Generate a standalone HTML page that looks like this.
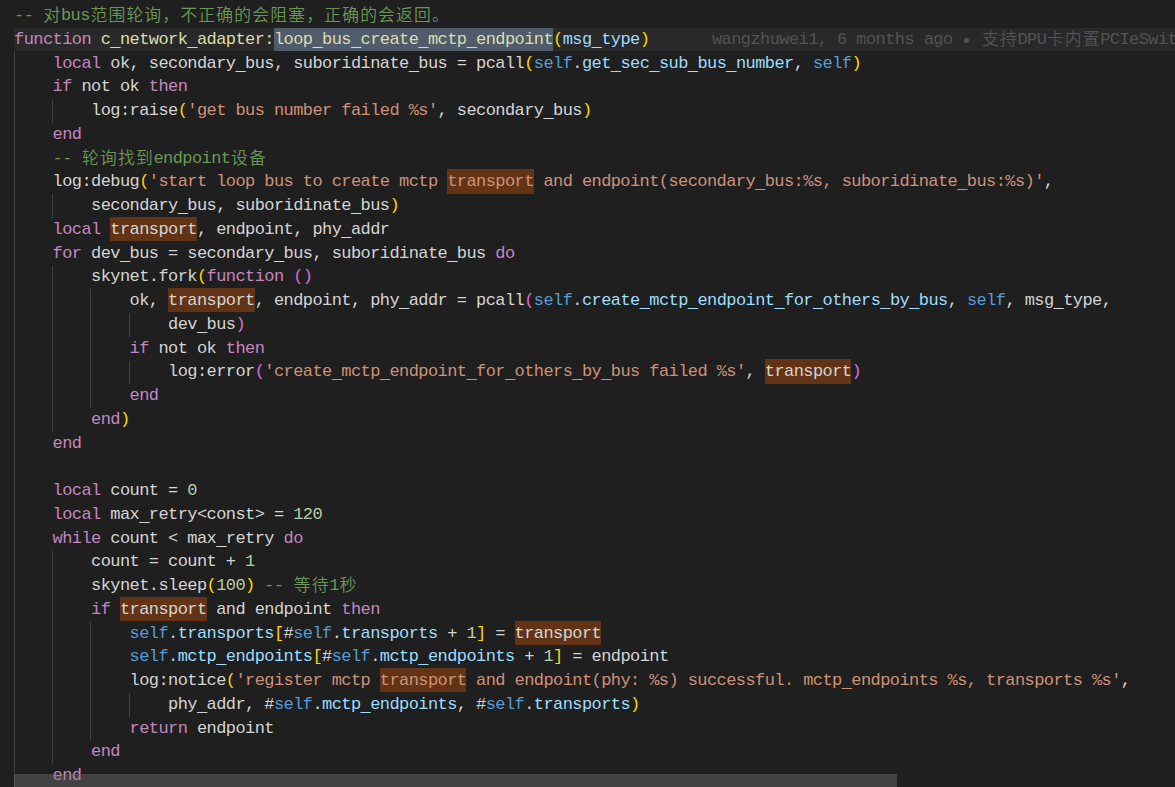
<!DOCTYPE html>
<html lang="zh"><head><meta charset="utf-8"><title>network_adapter.lua</title>
<style>
html,body{margin:0;padding:0;background:#1f1f1f;}
body{width:1175px;height:787px;overflow:hidden;position:relative;}
#gut{position:absolute;left:0;top:0;width:14px;height:787px;background:#1f1f1f;}
#ed{position:absolute;left:0;top:0;width:1175px;height:787px;overflow:hidden;
 font-family:"Liberation Mono","Noto Sans CJK SC",monospace;font-size:17.0px;color:#d4d4d4;
 font-variant-ligatures:none;letter-spacing:-0.5784px;}
.ln{position:absolute;left:14.1px;width:1160.9px;height:23.75px;line-height:23.75px;white-space:pre;overflow:visible;}
.ln.cur::before{content:"";position:absolute;left:-0.6px;right:0;top:0;height:23.0px;background:#292929;}
.tx{position:relative;top:-0.15px;display:inline-block;height:23.75px;line-height:23.75px;vertical-align:top;}
.g{position:absolute;top:0;width:1px;height:23.75px;background:#404040;margin-left:-0.6px;}
.z{letter-spacing:1.200px;font-size:16.8px;line-height:1px;font-family:"Noto Sans CJK SC",sans-serif;font-weight:350;position:relative;top:1.2px;left:0.600px;}
.k{color:#c586c0} .f{color:#dcdcaa} .p{color:#9cdcfe} .s{color:#569cd6} .t{color:#ce9178}
.n{color:#b5cea8} .c{color:#6a9955} .d{color:#d4d4d4}
.b1{color:#ffd700} .b2{color:#da70d6} .b3{color:#179fff}
.h{background:#623315;}
.sel{background:#505c6c;}
.h,.sel{display:inline-block;height:23.25px;line-height:23.75px;vertical-align:top;}
.h{margin-top:-1px;padding-top:1px;}
.blame{position:absolute;left:697.9px;top:-0.15px;color:#535353;height:23.75px;line-height:23.75px;}
.bu{display:inline-block;width:9.6216px;letter-spacing:0;text-align:center;font-size:19px;line-height:1px;vertical-align:-3.2px;text-indent:-1.5px;}
u{text-decoration:none;position:relative;top:2px;}
#sb{position:absolute;left:14px;top:774px;width:883px;height:13px;background:rgba(121,121,121,0.4);}
</style></head>
<body>
<div id="gut"></div>
<div id="ed">
<div class="ln" style="top:4.25px"><span class="tx"><span class="c">-- <span class="z">对</span>bus<span class="z">范围轮询，不正确的会阻塞，正确的会返回。</span></span></span></div>
<div class="ln cur" style="top:28.00px"><span class="tx"><span class="k">function</span><span class="d"> </span><span class="f">c<u>_</u>network<u>_</u>adapter:</span><span class="sel f">loop<u>_</u>bus<u>_</u>create<u>_</u>mctp<u>_</u>endpoint</span><span class="b1">(</span><span class="p">msg<u>_</u>type</span><span class="b1">)</span></span><span class="blame">wangzhuwei1, 6 months ago <span class="bu">•</span> <span class="z">支持</span>DPU<span class="z">卡内置</span>PCIeSwitch</span></div>
<div class="ln" style="top:51.75px"><i class="g" style="left:0.000px"></i><span class="tx">    <span class="k">local</span><span class="d"> ok, secondary<u>_</u>bus, suboridinate<u>_</u>bus = pcall</span><span class="b1">(</span><span class="s">self</span><span class="d">.</span><span class="p">get<u>_</u>sec<u>_</u>sub<u>_</u>bus<u>_</u>number</span><span class="d">, </span><span class="s">self</span><span class="b1">)</span></span></div>
<div class="ln" style="top:75.50px"><i class="g" style="left:0.000px"></i><span class="tx">    <span class="k">if</span><span class="d"> not ok </span><span class="k">then</span></span></div>
<div class="ln" style="top:99.25px"><i class="g" style="left:0.000px"></i><i class="g" style="left:38.486px"></i><span class="tx">        <span class="d">log:raise</span><span class="b1">(</span><span class="t">&#x27;get bus number failed %s&#x27;</span><span class="d">, secondary<u>_</u>bus</span><span class="b1">)</span></span></div>
<div class="ln" style="top:123.00px"><i class="g" style="left:0.000px"></i><span class="tx">    <span class="k">end</span></span></div>
<div class="ln" style="top:146.75px"><i class="g" style="left:0.000px"></i><span class="tx">    <span class="c">-- <span class="z">轮询找到</span>endpoint<span class="z">设备</span></span></span></div>
<div class="ln" style="top:170.50px"><i class="g" style="left:0.000px"></i><span class="tx">    <span class="d">log:debug</span><span class="b1">(</span><span class="t">&#x27;start loop bus to create mctp </span><span class="h t">transport</span><span class="t"> and endpoint(secondary<u>_</u>bus:%s, suboridinate<u>_</u>bus:%s)&#x27;</span><span class="d">,</span></span></div>
<div class="ln" style="top:194.25px"><i class="g" style="left:0.000px"></i><i class="g" style="left:38.486px"></i><span class="tx">        <span class="d">secondary<u>_</u>bus, suboridinate<u>_</u>bus</span><span class="b1">)</span></span></div>
<div class="ln" style="top:218.00px"><i class="g" style="left:0.000px"></i><span class="tx">    <span class="k">local</span><span class="d"> </span><span class="h d">transport</span><span class="d">, endpoint, phy<u>_</u>addr</span></span></div>
<div class="ln" style="top:241.75px"><i class="g" style="left:0.000px"></i><span class="tx">    <span class="k">for</span><span class="d"> dev<u>_</u>bus = secondary<u>_</u>bus, suboridinate<u>_</u>bus </span><span class="k">do</span></span></div>
<div class="ln" style="top:265.50px"><i class="g" style="left:0.000px"></i><i class="g" style="left:38.486px"></i><span class="tx">        <span class="d">skynet.fork</span><span class="b1">(</span><span class="k">function</span><span class="d"> </span><span class="b2">()</span></span></div>
<div class="ln" style="top:289.25px"><i class="g" style="left:0.000px"></i><i class="g" style="left:38.486px"></i><i class="g" style="left:76.973px"></i><span class="tx">            <span class="d">ok, </span><span class="h d">transport</span><span class="d">, endpoint, phy<u>_</u>addr = pcall</span><span class="b2">(</span><span class="s">self</span><span class="d">.</span><span class="p">create<u>_</u>mctp<u>_</u>endpoint<u>_</u>for<u>_</u>others<u>_</u>by<u>_</u>bus</span><span class="d">, </span><span class="s">self</span><span class="d">, msg<u>_</u>type,</span></span></div>
<div class="ln" style="top:313.00px"><i class="g" style="left:0.000px"></i><i class="g" style="left:38.486px"></i><i class="g" style="left:76.973px"></i><i class="g" style="left:115.459px"></i><span class="tx">                <span class="d">dev<u>_</u>bus</span><span class="b2">)</span></span></div>
<div class="ln" style="top:336.75px"><i class="g" style="left:0.000px"></i><i class="g" style="left:38.486px"></i><i class="g" style="left:76.973px"></i><span class="tx">            <span class="k">if</span><span class="d"> not ok </span><span class="k">then</span></span></div>
<div class="ln" style="top:360.50px"><i class="g" style="left:0.000px"></i><i class="g" style="left:38.486px"></i><i class="g" style="left:76.973px"></i><i class="g" style="left:115.459px"></i><span class="tx">                <span class="d">log:error</span><span class="b2">(</span><span class="t">&#x27;create<u>_</u>mctp<u>_</u>endpoint<u>_</u>for<u>_</u>others<u>_</u>by<u>_</u>bus failed %s&#x27;</span><span class="d">, </span><span class="h d">transport</span><span class="b2">)</span></span></div>
<div class="ln" style="top:384.25px"><i class="g" style="left:0.000px"></i><i class="g" style="left:38.486px"></i><i class="g" style="left:76.973px"></i><span class="tx">            <span class="k">end</span></span></div>
<div class="ln" style="top:408.00px"><i class="g" style="left:0.000px"></i><i class="g" style="left:38.486px"></i><span class="tx">        <span class="k">end</span><span class="b1">)</span></span></div>
<div class="ln" style="top:431.75px"><i class="g" style="left:0.000px"></i><span class="tx">    <span class="k">end</span></span></div>
<div class="ln" style="top:455.50px"><i class="g" style="left:0.000px"></i><span class="tx"></span></div>
<div class="ln" style="top:479.25px"><i class="g" style="left:0.000px"></i><span class="tx">    <span class="k">local</span><span class="d"> count = </span><span class="n">0</span></span></div>
<div class="ln" style="top:503.00px"><i class="g" style="left:0.000px"></i><span class="tx">    <span class="k">local</span><span class="d"> max<u>_</u>retry&lt;const&gt; = </span><span class="n">120</span></span></div>
<div class="ln" style="top:526.75px"><i class="g" style="left:0.000px"></i><span class="tx">    <span class="k">while</span><span class="d"> count &lt; max<u>_</u>retry </span><span class="k">do</span></span></div>
<div class="ln" style="top:550.50px"><i class="g" style="left:0.000px"></i><i class="g" style="left:38.486px"></i><span class="tx">        <span class="d">count = count + </span><span class="n">1</span></span></div>
<div class="ln" style="top:574.25px"><i class="g" style="left:0.000px"></i><i class="g" style="left:38.486px"></i><span class="tx">        <span class="d">skynet.sleep</span><span class="b1">(</span><span class="n">100</span><span class="b1">)</span><span class="d"> </span><span class="c">-- <span class="z">等待</span>1<span class="z">秒</span></span></span></div>
<div class="ln" style="top:598.00px"><i class="g" style="left:0.000px"></i><i class="g" style="left:38.486px"></i><span class="tx">        <span class="k">if</span><span class="d"> </span><span class="h d">transport</span><span class="d"> and endpoint </span><span class="k">then</span></span></div>
<div class="ln" style="top:621.75px"><i class="g" style="left:0.000px"></i><i class="g" style="left:38.486px"></i><i class="g" style="left:76.973px"></i><span class="tx">            <span class="s">self</span><span class="d">.</span><span class="p">transports</span><span class="b1">[</span><span class="d">#</span><span class="s">self</span><span class="d">.</span><span class="p">transports</span><span class="d"> + </span><span class="n">1</span><span class="b1">]</span><span class="d"> = </span><span class="h d">transport</span></span></div>
<div class="ln" style="top:645.50px"><i class="g" style="left:0.000px"></i><i class="g" style="left:38.486px"></i><i class="g" style="left:76.973px"></i><span class="tx">            <span class="s">self</span><span class="d">.</span><span class="p">mctp<u>_</u>endpoints</span><span class="b1">[</span><span class="d">#</span><span class="s">self</span><span class="d">.</span><span class="p">mctp<u>_</u>endpoints</span><span class="d"> + </span><span class="n">1</span><span class="b1">]</span><span class="d"> = endpoint</span></span></div>
<div class="ln" style="top:669.25px"><i class="g" style="left:0.000px"></i><i class="g" style="left:38.486px"></i><i class="g" style="left:76.973px"></i><span class="tx">            <span class="d">log:notice</span><span class="b1">(</span><span class="t">&#x27;register mctp </span><span class="h t">transport</span><span class="t"> and endpoint(phy: %s) successful. mctp<u>_</u>endpoints %s, transports %s&#x27;</span><span class="d">,</span></span></div>
<div class="ln" style="top:693.00px"><i class="g" style="left:0.000px"></i><i class="g" style="left:38.486px"></i><i class="g" style="left:76.973px"></i><i class="g" style="left:115.459px"></i><span class="tx">                <span class="d">phy<u>_</u>addr, #</span><span class="s">self</span><span class="d">.</span><span class="p">mctp<u>_</u>endpoints</span><span class="d">, #</span><span class="s">self</span><span class="d">.</span><span class="p">transports</span><span class="b1">)</span></span></div>
<div class="ln" style="top:716.75px"><i class="g" style="left:0.000px"></i><i class="g" style="left:38.486px"></i><i class="g" style="left:76.973px"></i><span class="tx">            <span class="k">return</span><span class="d"> endpoint</span></span></div>
<div class="ln" style="top:740.50px"><i class="g" style="left:0.000px"></i><i class="g" style="left:38.486px"></i><span class="tx">        <span class="k">end</span></span></div>
<div class="ln" style="top:764.25px"><i class="g" style="left:0.000px"></i><span class="tx">    <span class="k">end</span></span></div>
</div>
<div id="sb"></div>
</body></html>
